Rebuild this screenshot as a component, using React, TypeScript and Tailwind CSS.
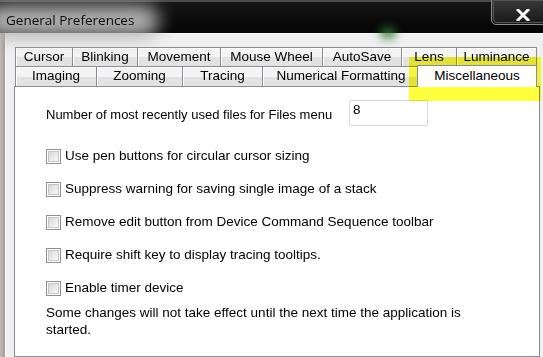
import React from "react";

const row1 = [
  { label: "Cursor", w: "w-[58px]" },
  { label: "Blinking", w: "w-[66px]" },
  { label: "Movement", w: "w-[84px]" },
  { label: "Mouse Wheel", w: "w-[103px]" },
  { label: "AutoSave", w: "w-[80px]" },
  { label: "Lens", w: "w-[56px]" },
  { label: "Luminance", w: "w-[81px]" },
];

const row2 = [
  { label: "Imaging", w: "w-[82px]" },
  { label: "Zooming", w: "w-[87px]" },
  { label: "Tracing", w: "w-[81px]" },
  { label: "Numerical Formatting", w: "w-[158px]" },
];

const options = [
  "Use pen buttons for circular cursor sizing",
  "Suppress warning for saving single image of a stack",
  "Remove edit button from Device Command Sequence toolbar",
  "Require shift key to display tracing tooltips.",
  "Enable timer device",
];

function Tab({ label, w, h }: { label: string; w: string; h: string }) {
  return (
    <div
      className={`${w} ${h} -ml-px first:ml-0 flex items-center justify-center border border-b-0 border-[#898c95] bg-gradient-to-b from-[#f4f4f4] from-50% to-[#e2e2e2] to-50% shadow-[inset_1px_1px_0_#fff] text-[13.5px] text-black whitespace-nowrap`}
    >
      {label}
    </div>
  );
}

function Checkbox() {
  return (
    <div className="w-[15px] h-[15px] shrink-0 border border-[#8e8f8f] bg-white p-px">
      <div className="w-full h-full border border-[#c6c6c6] bg-gradient-to-br from-[#d6d6d6] to-[#fbfbfb]" />
    </div>
  );
}

export default function App() {
  return (
    <div className="relative w-[543px] h-[357px] overflow-hidden bg-black font-['Liberation_Sans',Arial,sans-serif]">
      {/* title bar */}
      <div className="relative h-[33px] border-t-2 border-[#4a4a4a] bg-gradient-to-b from-[#161616] to-[#050505]">
        <div className="absolute left-[-16px] top-[3px] w-[175px] h-[32px] rounded-full bg-[#b0b0b0] blur-[9px]" />
        <div className="absolute left-[380px] top-[26px] w-[16px] h-[10px] rounded-full bg-[#2e7a2e] blur-[5px]" />
        <div className="relative pl-[6px] pt-[8px] text-[13.5px] text-[#0a0a0a] font-['Open_Sans',sans-serif]">
          General Preferences
        </div>
        <div className="absolute left-[491px] top-[-4px] w-[60px] h-[27px] rounded-bl-[5px] border border-[#8a8a8a] bg-gradient-to-b from-[#3a3a3a] to-[#181818] p-px">
          <div className="w-full h-full rounded-bl-[4px] border border-[#555]" />
        </div>
        <svg className="absolute left-[516px] top-[7px]" width="14" height="12" viewBox="0 0 14 12">
          <path d="M2 1 L12 11 M12 1 L2 11" stroke="#fff" strokeWidth="3" strokeLinecap="square" />
        </svg>
      </div>

      <div className="flex h-[324px]">
        {/* window frame */}
        <div className="w-[5px] bg-gradient-to-r from-[#c4bcb4] to-[#a49b93]" />
        <div className="flex-1 border-l border-t border-[#fcfcfc] bg-[#f0f0f0] pl-[8px] pr-[3px] pt-[13px] flex flex-col">
          {/* tabs */}
          <div className="flex pl-px">
            {row1.map((t) => (
              <Tab key={t.label} label={t.label} w={t.w} h="h-[19px]" />
            ))}
          </div>
          <div className="flex pl-px">
            {row2.map((t) => (
              <Tab key={t.label} label={t.label} w={t.w} h="h-[20px]" />
            ))}
            <div className="relative z-10 -ml-[3px] -mt-px -mb-px w-[120px] h-[22px] flex items-center justify-center border border-b-0 border-[#898c95] bg-white text-[13.5px] text-black pb-[1px]">
              Miscellaneous
            </div>
          </div>

          {/* tab page */}
          <div className="flex-1 border border-[#898c95] bg-white pl-[31px] pt-[13px]">
            <div className="flex items-start">
              <span className="mt-[5px] text-[13px] text-black">
                Number of most recently used files for Files menu
              </span>
              <div className="ml-[17px] w-[79px] h-[26px] rounded-[2px] border border-[#d5d8df] pl-[3px] text-[13.5px] leading-[17px] text-black">
                8
              </div>
            </div>
            <div className="mt-[23px] flex flex-col gap-[18px]">
              {options.map((o) => (
                <div key={o} className="flex items-center gap-[4px] h-[15px]">
                  <Checkbox />
                  <span className="text-[13.5px] text-black whitespace-nowrap">{o}</span>
                </div>
              ))}
            </div>
            <p className="mt-[8px] text-[13.5px] leading-[17px] text-black w-[440px]">
              Some changes will not take effect until the next time the application is started.
            </p>
          </div>
        </div>
      </div>

      {/* yellow highlight marker */}
      <div className="absolute left-[409px] top-[57px] w-[132px] h-[44px] bg-[#ffff3c] mix-blend-multiply" />
    </div>
  );
}
